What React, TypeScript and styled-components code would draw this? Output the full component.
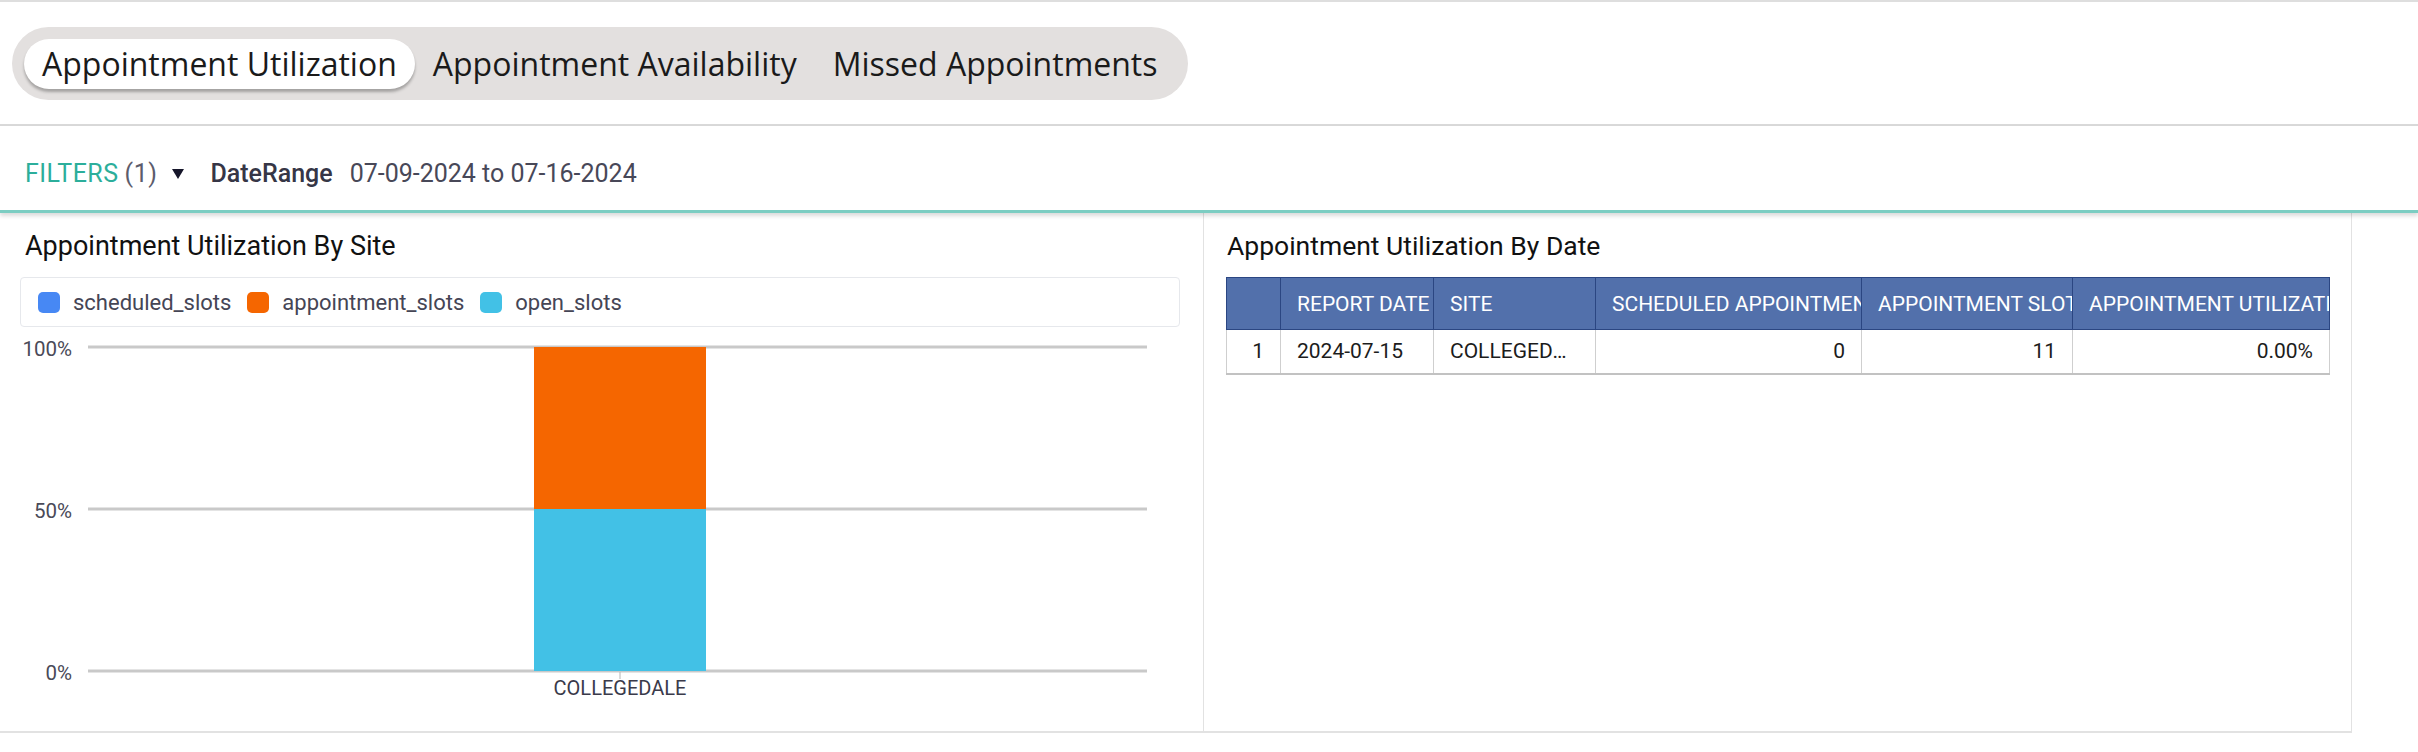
import React from "react";
import styled, { createGlobalStyle } from "styled-components";

const GlobalStyle = createGlobalStyle`
  html, body { margin: 0; padding: 0; background: #ffffff; }
  body { font-family: Roboto, "Liberation Sans", sans-serif; color: #1a1a1a; }
  * { box-sizing: border-box; }
`;

const Page = styled.div`
  width: 2418px;
  border-top: 2px solid #dedede;
`;

const TabsHeader = styled.header`
  padding: 25px 12px 24px;
  border-bottom: 2px solid #d9d9d9;
`;

const TabPill = styled.nav`
  display: inline-flex;
  align-items: center;
  height: 73px;
  padding: 0 12px;
  background: #e3e0df;
  border-radius: 37px;
`;

const Tab = styled.button<{ $active?: boolean }>`
  height: 50px;
  padding: 0 18px;
  border: none;
  border-radius: 25px;
  font-family: "Open Sans", "Noto Sans", sans-serif;
  font-size: 32px;
  font-weight: 500;
  color: #1a1a1a;
  cursor: pointer;
  background: ${(p) => (p.$active ? "#ffffff" : "transparent")};
  box-shadow: ${(p) => (p.$active ? "0 3px 3px rgba(0,0,0,0.28)" : "none")};
  white-space: nowrap;
`;

const FilterBar = styled.div`
  position: relative;
  z-index: 1;
  display: flex;
  align-items: center;
  height: 87px;
  padding: 12px 0 0 25px;
  border-bottom: 3px solid #7ccdc2;
  box-shadow: 0 3px 4px rgba(0, 0, 0, 0.14);
  font-size: 25px;
  line-height: 30px;
`;

const FilterLabel = styled.span`
  color: #2cae9b;
  letter-spacing: 0.5px;
`;

const FilterCount = styled.span`
  color: #5c5c6c;
  margin-left: 6px;
  letter-spacing: 0.5px;
`;

const Caret = styled.span`
  display: inline-block;
  width: 0;
  height: 0;
  margin-left: 15px;
  border-left: 6.5px solid transparent;
  border-right: 6.5px solid transparent;
  border-top: 10px solid #16162a;
`;

const FilterKey = styled.span`
  margin-left: 26px;
  font-weight: 500;
  color: #363646;
`;

const FilterValue = styled.span`
  margin-left: 17px;
  color: #484858;
`;

const Panels = styled.main`
  display: grid;
  grid-template-columns: 1204px 1148px;
`;

const Panel = styled.section<{ $padLeft: number }>`
  height: 520px;
  padding: 17px 0 0 ${(p) => p.$padLeft}px;
  border-right: 1px solid #e2e2e2;
  border-bottom: 2px solid #e2e2e2;
`;

const PanelTitle = styled.h2<{ $indent: number; $size: number }>`
  margin: 0 0 15px ${(p) => p.$indent}px;
  font-size: ${(p) => p.$size}px;
  line-height: 32px;
  font-weight: 400;
  color: #111111;
`;

const Legend = styled.div`
  display: flex;
  align-items: center;
  width: 1160px;
  height: 50px;
  padding: 0 17px;
  border: 1px solid #e6e8ec;
  border-radius: 4px;
`;

const LegendItem = styled.div`
  display: flex;
  align-items: center;
  margin-right: 16px;
  font-size: 22px;
  color: #454555;
`;

const Swatch = styled.span<{ $color: string }>`
  width: 22px;
  height: 21px;
  margin-right: 13px;
  border-radius: 5px;
  background: ${(p) => p.$color};
`;

const ChartSvg = styled.svg`
  display: block;
  font-family: Roboto, "Liberation Sans", sans-serif;
`;

const Table = styled.table`
  border-collapse: collapse;
  table-layout: fixed;
  width: 1103px;
`;

const HeadCell = styled.th`
  height: 52px;
  padding: 0 14px 0 16px;
  background: #5270ab;
  border: 1px solid #2b4682;
  color: #ffffff;
  font-size: 21px;
  font-weight: 400;
  text-align: left;
  text-transform: uppercase;
  white-space: nowrap;
  overflow: hidden;
  text-overflow: clip;
`;

const BodyCell = styled.td<{ $align?: "left" | "right" }>`
  height: 44px;
  padding: 0 16px;
  border: 1px solid #cfcfcf;
  border-bottom: 2px solid #c2c2c2;
  font-size: 21px;
  color: #1c1c1c;
  text-align: ${(p) => p.$align ?? "left"};
  white-space: nowrap;
  overflow: hidden;
  text-overflow: ellipsis;
`;

const legend = [
  { name: "scheduled_slots", color: "#4788f4" },
  { name: "appointment_slots", color: "#f56600" },
  { name: "open_slots", color: "#42c1e6" },
];

const columns = [
  { title: "", width: 54 },
  { title: "Report Date", width: 153 },
  { title: "Site", width: 162 },
  { title: "Scheduled Appointments", width: 266 },
  { title: "Appointment Slots", width: 211 },
  { title: "Appointment Utilization", width: 257 },
];

const rows = [
  ["1", "2024-07-15", "COLLEGEDALE", "0", "11", "0.00%"],
];

const numericCols = new Set([0, 3, 4, 5]);

function UtilizationChart() {
  const left = 68;
  const right = 1127;
  const ticks = [
    { label: "100%", y: 20 },
    { label: "50%", y: 182 },
    { label: "0%", y: 344 },
  ];
  const barX = 514;
  const barW = 172;
  const center = barX + barW / 2;
  return (
    <ChartSvg width={1160} height={380} viewBox="0 0 1160 380">
      {ticks.map((t) => (
        <g key={t.label}>
          <line x1={left} x2={right} y1={t.y} y2={t.y} stroke="#c9c9c9" strokeWidth={3} />
          <text x={52} y={t.y + 9} textAnchor="end" fontSize={20.5} fill="#4a4a58">
            {t.label}
          </text>
        </g>
      ))}
      <rect x={barX} y={182} width={barW} height={162} fill="#42c1e6" />
      <rect x={barX} y={20} width={barW} height={162} fill="#f56600" />
      <line x1={center} x2={center} y1={345} y2={352} stroke="#b5b5b5" strokeWidth={1} />
      <text x={center} y={368} textAnchor="middle" fontSize={20} fill="#3a3a4a">
        COLLEGEDALE
      </text>
    </ChartSvg>
  );
}

export default function App() {
  return (
    <Page>
      <GlobalStyle />
      <TabsHeader>
        <TabPill>
          <Tab $active>Appointment Utilization</Tab>
          <Tab>Appointment Availability</Tab>
          <Tab>Missed Appointments</Tab>
        </TabPill>
      </TabsHeader>
      <FilterBar>
        <FilterLabel>FILTERS</FilterLabel>
        <FilterCount>(1)</FilterCount>
        <Caret />
        <FilterKey>DateRange</FilterKey>
        <FilterValue>07-09-2024 to 07-16-2024</FilterValue>
      </FilterBar>
      <Panels>
        <Panel $padLeft={20}>
          <PanelTitle $indent={5} $size={27}>Appointment Utilization By Site</PanelTitle>
          <Legend>
            {legend.map((l) => (
              <LegendItem key={l.name}>
                <Swatch $color={l.color} />
                {l.name}
              </LegendItem>
            ))}
          </Legend>
          <UtilizationChart />
        </Panel>
        <Panel $padLeft={22}>
          <PanelTitle $indent={1} $size={26.5}>Appointment Utilization By Date</PanelTitle>
          <Table>
            <colgroup>
              {columns.map((c, i) => (
                <col key={i} style={{ width: c.width }} />
              ))}
            </colgroup>
            <thead>
              <tr>
                {columns.map((c, i) => (
                  <HeadCell key={i}>{c.title}</HeadCell>
                ))}
              </tr>
            </thead>
            <tbody>
              {rows.map((r, ri) => (
                <tr key={ri}>
                  {r.map((v, ci) => (
                    <BodyCell key={ci} $align={numericCols.has(ci) ? "right" : "left"}>
                      {v}
                    </BodyCell>
                  ))}
                </tr>
              ))}
            </tbody>
          </Table>
        </Panel>
      </Panels>
    </Page>
  );
}
